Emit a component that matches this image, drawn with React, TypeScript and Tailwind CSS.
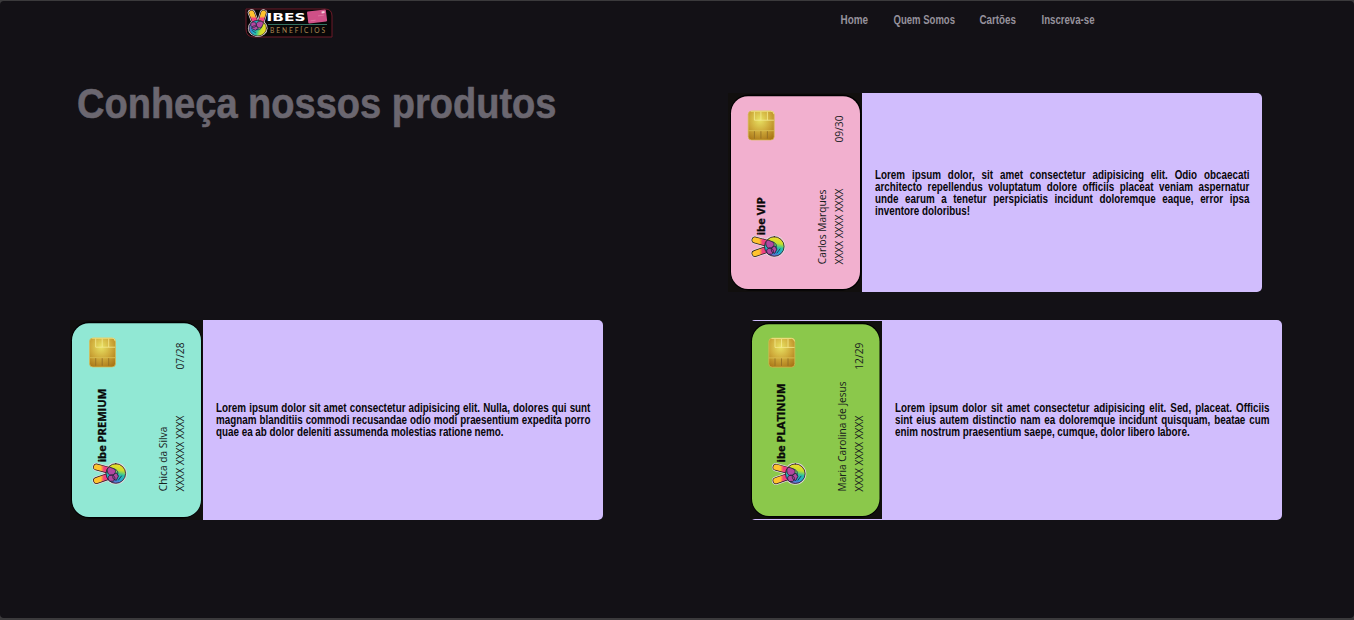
import React from "react";

const links = [
  { label: "Home", width: 27.5 },
  { label: "Quem Somos", width: 61.5 },
  { label: "Cartões", width: 36.5 },
  { label: "Inscreva-se", width: 53 },
];

type CardData = {
  brand: string;
  brandLength: number;
  holder: string;
  holderLength: number;
  date: string;
  color: string;
  width: number;
  height: number;
  shift: number;
};

const vip: CardData = { brand: "ibe VIP", brandLength: 38, holder: "Carlos Marques", holderLength: 74.5, date: "09/30", color: "#f2b0cf", width: 134, height: 199, shift: 1 };
const premium: CardData = { brand: "ibe PREMIUM", brandLength: 73.5, holder: "Chica da Silva", holderLength: 64.5, date: "07/28", color: "#91e8d4", width: 133, height: 200, shift: 0 };
const platinum: CardData = { brand: "ibe PLATINUM", brandLength: 79, holder: "Maria Carolina de Jesus", holderLength: 110, date: "12/29", color: "#8bc84b", width: 132, height: 198, shift: -1 };

function Hand({ id }: { id: string }) {
  return (
    <g strokeLinecap="round" strokeLinejoin="round">
      <defs>
        <linearGradient id={id + "f"} x1="0" y1="0" x2="0" y2="1">
          <stop offset="0" stopColor="#ffc62e" />
          <stop offset=".42" stopColor="#ffc22f" />
          <stop offset=".6" stopColor="#f2447c" />
          <stop offset="1" stopColor="#e33b9b" />
        </linearGradient>
        <linearGradient id={id + "p"} x1="0" y1=".4" x2="1" y2=".6">
          <stop offset="0" stopColor="#7b58c8" />
          <stop offset=".22" stopColor="#21a4d8" />
          <stop offset=".48" stopColor="#2cc2a0" />
          <stop offset=".7" stopColor="#c9df2b" />
          <stop offset="1" stopColor="#f5dc2c" />
        </linearGradient>
      </defs>
      <path d="M4.5 4 9 17M18 4 14.5 17" fill="none" stroke="#e4dadd" strokeWidth="8.4" />
      <circle cx="11.5" cy="23.3" r="11" fill="#e4dadd" />
      <path d="M4.5 4 9 17M18 4 14.5 17" fill="none" stroke="#24151f" strokeWidth="6.8" />
      <path d="M1.9 4.9A2.7 2.7 0 0 1 7.1 3.2L12 17l-5.6 1zM15.4 3.2A2.7 2.7 0 0 1 20.6 4.8L17.3 18l-5.6-1z" fill={`url(#${id}f)`} />
      <circle cx="11.5" cy="23.3" r="9.8" fill={`url(#${id}p)`} stroke="#24151f" strokeWidth=".8" />
      <path d="M4 17c3-3 6-1 6 2s-4 5-6 2zM10 17c2-3 7-3 8 0l-2 5c-2 2-5 1-6-2zM6 21c3-2 5 0 6 3l-3 2-4-2z" fill="#b248a2" stroke="#28213c" strokeWidth=".9" />
      <path d="M10 25c3 1 5 0 6-3M5 26l4 3" fill="none" stroke="#193e65" strokeWidth="1" />
    </g>
  );
}

function Chip({ id }: { id: string }) {
  return (
    <g>
      <defs>
        <radialGradient id={id} cx=".45" cy=".3" r=".8">
          <stop offset="0" stopColor="#e8e263" />
          <stop offset=".5" stopColor="#cfab3b" />
          <stop offset="1" stopColor="#a87315" />
        </radialGradient>
      </defs>
      <rect x=".3" y=".3" width="26" height="29" rx="3.5" fill={`url(#${id})`} stroke="#d9bd54" strokeWidth=".7" />
      <path d="M3 .5H23Q26 .5 26 3.5M6.5 1V9.5H26M13 1V9.5M19.5 1V9.5" fill="none" stroke="#f5eb91" strokeWidth=".8" />
      <path d="M.5 20H26" stroke="#d8bd53" strokeWidth=".9" />
      <path d="M6.5 20.5V28M13 20.5V28M19.5 20.5V28" stroke="#8f6b25" strokeWidth=".8" />
    </g>
  );
}

function CardArt({ card }: { card: CardData }) {
  const { width: w, height: h, shift: s } = card;
  const lift = s === -1 ? -0.8 : 0;
  return (
    <svg width={w} height={h} viewBox={`0 0 ${w} ${h}`} className="block shrink-0" fontFamily='"Open Sans", sans-serif'>
      <rect width={w} height={h} fill="#110f0e" />
      <rect x={s === 1 ? 2 : 1} y="1.5" width={w - 2.5} height={h - 3} rx="19" fill="#000" />
      <rect x={s === 1 ? 3 : 2} y="3.3" width={s === -1 ? 127.5 : 129} height={h - 6.3} rx="17" fill={card.color} />
      <g transform={`translate(0 ${lift})`}>
        <g transform={`translate(${19.2 + s * 0.7} 17.7)`}>
          <Chip id={card.date} />
        </g>
        <text transform={`translate(${35.7 + s} 142.3) rotate(-90)`} fontSize="10.6" fontWeight="700" fill="#080808" stroke="#080808" strokeWidth=".3" textLength={card.brandLength} lengthAdjust="spacingAndGlyphs">{card.brand}</text>
        <g transform={`translate(${22.5 + s * 0.5} 165) rotate(-90)`}>
          <Hand id={card.date} />
        </g>
        <g fontSize="10.6" fill="#18201d">
          <text transform={`translate(${97.4 + s} 171.2) rotate(-90)`} textLength={card.holderLength} lengthAdjust="spacingAndGlyphs">{card.holder}</text>
          <text transform={`translate(${114 + s} 171.5) rotate(-90)`} textLength="76" lengthAdjust="spacingAndGlyphs">XXXX XXXX XXXX</text>
          <text transform={`translate(${114 + s} 49.5) rotate(-90)`} textLength="27" lengthAdjust="spacingAndGlyphs">{card.date}</text>
        </g>
      </g>
    </svg>
  );
}

function Copy({ lines, last }: { lines: string[]; last: string }) {
  return (
    <div className="flex flex-1 items-center pl-[13px]">
      <p className="w-[468px] shrink-0 origin-left scale-x-[0.8] text-[12.3px] leading-[12px] font-bold text-[#080609]">
        {lines.map((line) => (
          <span key={line} className="block whitespace-nowrap [text-align-last:justify]">{line}</span>
        ))}
        <span className="block whitespace-nowrap">{last}</span>
      </p>
    </div>
  );
}

function Product({ card, lines, last }: { card: CardData; lines: string[]; last: string }) {
  return (
    <article className="flex h-full items-center rounded-[5px] bg-[#d1bdfd]">
      <CardArt card={card} />
      <Copy lines={lines} last={last} />
    </article>
  );
}

function Logo() {
  return (
    <svg width="88" height="30" viewBox="0 0 88 30" className="block">
      <path d="M1 1H80Q87 1 87 8V29H9Q1 29 1 21Z" fill="#080708" stroke="#6d1b28" strokeWidth="1" />
      <g transform="translate(2.5 1.5) scale(.89 .8)"><Hand id="logo" /></g>
      <text x="21.5" y="13" fontFamily='"DejaVu Sans", sans-serif' fontWeight="700" fontSize="11" fill="#fff" textLength="39" lengthAdjust="spacingAndGlyphs">IBES</text>
      <g transform="rotate(-7 72 8)">
        <rect x="62.5" y="2.5" width="19" height="12" rx="1" fill="#cf5087" />
        <path d="M73 8h6M65 12h5" stroke="#df78a2" strokeWidth=".8" />
        <rect x="77" y="4" width="3" height="2" fill="#f6cad9" />
      </g>
      <path d="M23 16.5H82" stroke="#347260" strokeWidth="1" />
      <text x="25" y="24.5" fontFamily='"Lato", sans-serif' fontSize="6.6" fill="#ae8a53" textLength="55">BENEFÍCIOS</text>
    </svg>
  );
}

export default function App() {
  return (
    <div className="h-[620px] w-[1354px] overflow-hidden bg-[#3b3a3c] pt-px font-['Liberation_Sans',Arial,sans-serif]">
      <div className="h-[617px] rounded-[4px] bg-[#131116]">
        <header className="flex h-[92px] items-start pl-[245px] pt-[7px]">
          <Logo />
          <nav className="ml-[508px] flex gap-[25px] pt-[5px] text-[12px] leading-[14px] font-bold text-[#96919c]">
            {links.map((link) => (
              <a key={link.label} href="#">
                <svg width={link.width} height="14" className="block overflow-visible">
                  <text x="-0.5" y="11" fill="currentColor" textLength={link.width} lengthAdjust="spacingAndGlyphs">{link.label}</text>
                </svg>
              </a>
            ))}
          </nav>
        </header>
        <main>
          <section className="flex h-[199px] pl-[77px]">
            <div className="w-[651px]">
              <h1 className="-mt-[13px] w-max origin-left scale-x-[0.905] text-[42px] leading-[48px] font-bold text-[#6b6770] [-webkit-text-stroke:0.6px_#6b6770]">Conheça nossos produtos</h1>
            </div>
            <div className="w-[534px]">
              <Product
                card={vip}
                lines={["Lorem ipsum dolor, sit amet consectetur adipisicing elit. Odio obcaecati", "architecto repellendus voluptatum dolore officiis placeat veniam aspernatur", "unde earum a tenetur perspiciatis incidunt doloremque eaque, error ipsa"]}
                last="inventore doloribus!"
              />
            </div>
          </section>
          <section className="mt-7 flex h-[200px] pl-[70px]">
            <div className="mr-[147px] w-[533px]">
              <Product
                card={premium}
                lines={["Lorem ipsum dolor sit amet consectetur adipisicing elit. Nulla, dolores qui sunt", "magnam blanditiis commodi recusandae odio modi praesentium expedita porro"]}
                last="quae ea ab dolor deleniti assumenda molestias ratione nemo."
              />
            </div>
            <div className="w-[532px]">
              <Product
                card={platinum}
                lines={["Lorem ipsum dolor sit amet consectetur adipisicing elit. Sed, placeat. Officiis", "sint eius autem distinctio nam ea doloremque incidunt quisquam, beatae cum"]}
                last="enim nostrum praesentium saepe, cumque, dolor libero labore."
              />
            </div>
          </section>
        </main>
      </div>
    </div>
  );
}
